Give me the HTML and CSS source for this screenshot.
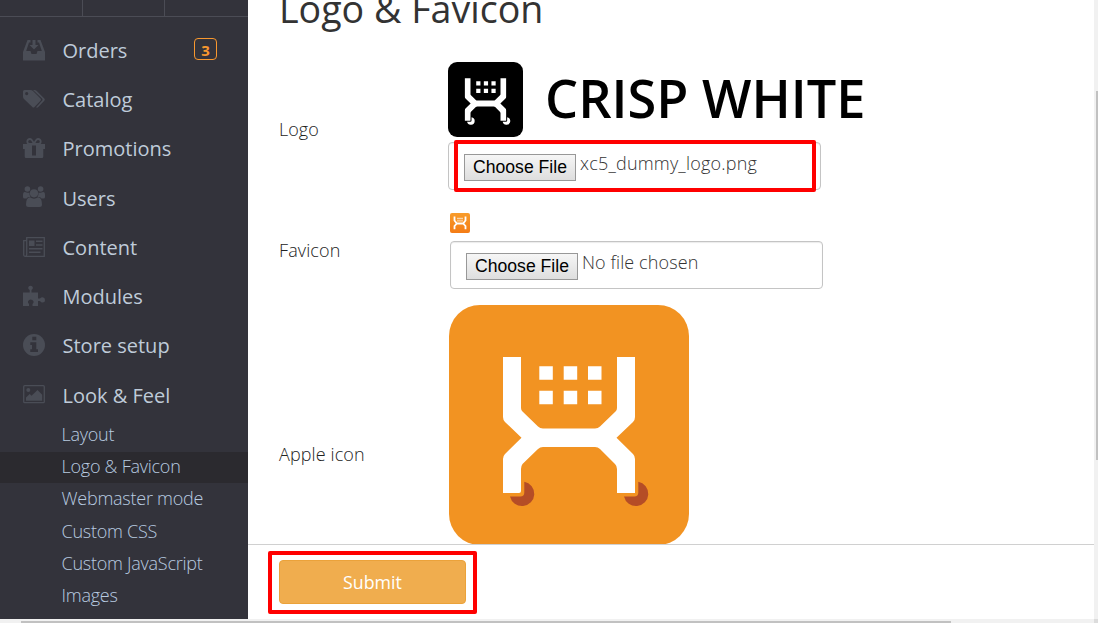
FILE: index.html
```html
<!DOCTYPE html>
<html lang="en">
<head>
<meta charset="utf-8">
<title>Logo &amp; Favicon</title>
<link rel="stylesheet" href="styles.css">
</head>
<body>
<svg class="defs" width="0" height="0">
  <symbol id="cart" viewBox="0 0 240 240">
    <path d="M54 52H72V103Q72 105 73.500 106.500L89 121.500Q91 123.500 94 123.500H146Q149 123.500 151 121.500L166.500 106.500Q168 105 168 103V52H186V112Q186 115 184 117L167.500 132.700L184 149Q186 151 186 154V188H168V164Q168 161 166 159L151 144Q149 142 146 142H94Q91 142 89 144L73.500 159Q72 161 72 164V186Q72 188 70 188H54V154Q54 151 56 149L72.500 132.700L56 117Q54 115 54 112Z"/>
    <path d="M90.300 61.300h13.500v13.500h-13.500zM114.700 61.300h13.500v13.500h-13.500zM139 61.300h13.500v13.500H139zM90.300 85.700h13.500v13.500h-13.500zM114.700 85.700h13.500v13.500h-13.500zM139 85.700h13.500v13.500H139z"/>
  </symbol>
  <symbol id="wheels" viewBox="0 0 240 240">
    <path d="M75.300 176.700A12.300 12.300 0 1 1 61 191.500H71.300Q75.300 191.500 75.300 187.500ZM189.300 176.700A12.300 12.300 0 1 1 175 191.500H185.300Q189.300 191.500 189.300 187.500Z"/>
  </symbol>
</svg>
<div class="app">
  <div class="page">
    <aside class="sidebar">
      <div class="tabs"><span></span><span></span><span></span></div>
      <nav class="menu">
        <a class="item"><svg class="icon" viewBox="0 0 22 22"><path fill-rule="evenodd" d="M4.500 1H7.500V3.500H6L3.200 12H7.500L8.500 15H13.500L14.500 12H18.800L16 3.500H14.500V1H17.500L22 13V21Q22 21.500 21.500 21.500H.5Q0 21.500 0 21V13ZM9.500 1H12.500V6H15.500L11 10.500L6.500 6H9.500Z"/></svg><span>Orders</span><b class="badge">3</b></a>
        <a class="item"><svg class="icon" viewBox="0 0 22 22"><path fill-rule="evenodd" d="M0 3.500Q0 2 1.500 2H7.500Q9 2 10 3L17.500 10.500Q18.500 11.600 17.500 12.700L11.500 19Q10.500 20 9.300 19L1 11Q0 10 0 8.500ZM3.700 4A1.600 1.600 0 1 0 3.700 7.200A1.600 1.600 0 1 0 3.700 4Z"/><path d="M10 2H11.500Q12.800 2 13.800 3L21.300 10.500Q22.300 11.600 21.300 12.700L15.300 19Q14.200 20.200 13 19.200L19 12.800Q20 11.600 19 10.500Z"/></svg><span>Catalog</span></a>
        <a class="item"><svg class="icon" viewBox="0 0 22 22"><path d="M0 7H22V12H20.300V19.500Q20.300 21 19 21H3Q1.700 21 1.700 19.500V12H0Z"/><path class="line" d="M11 7Q9 2 6.800 2A2.500 2.500 0 0 0 6.800 7ZM11 7Q13 2 15.200 2A2.500 2.500 0 0 1 15.200 7Z"/><path class="hole" d="M9 8.500H13V18.500H9Z"/></svg><span>Promotions</span></a>
        <a class="item"><svg class="icon" viewBox="0 0 22 22"><circle cx="4.400" cy="3" r="2.800"/><circle cx="17.600" cy="3" r="2.800"/><path d="M0 11V8.500Q0 5.500 2 6Q4.500 7.200 6.500 6.500Q6.300 9.500 7.500 11H5Q4 12 3.500 12.500H1.500Q0 12.500 0 11ZM22 11V8.500Q22 5.500 20 6Q17.500 7.200 15.500 6.500Q15.700 9.500 14.500 11H17Q18 12 18.500 12.500H20.500Q22 12.500 22 11Z"/><circle cx="11" cy="7.300" r="4.100"/><path d="M7 11.300Q11 14 15 11.300Q19 11.500 19 18.500Q19 21 16.500 21H5.500Q3 21 3 18.500Q3 11.500 7 11.300Z"/></svg><span>Users</span></a>
        <a class="item"><svg class="icon" viewBox="0 0 22 22"><path class="line thin" d="M3.700 1.700H21.300V20.300H2.200Q.7 20.300 .7 18.500V4.700H3.700V18.500Q3.700 20 2.500 20.300M3.700 1V5"/><path d="M6 4.500h5.500v5.500H6zM13 4.500h6.500V6H13zM13 8.300h6.500v1.500H13zM6 12h13.500v1.500H6zM6 15.500h11.500V17H6z"/></svg><span>Content</span></a>
        <a class="item"><svg class="icon" viewBox="0 0 22 22"><path d="M0 7.500H6.700V5Q5 4 5.200 2.500Q5.500 .7 7.500 .7T9.900 2.500Q10 4 8.500 5V7.500H15V13.500H17Q18 12.300 19.500 12.300Q22 12.500 22 15T19.500 17.500Q18 17.500 17 16H15V21H9.500V19Q11 18 10.500 16.200Q9.500 14.500 7.700 14.500T5 16.200Q4.500 18 6 19V21H0Z"/></svg><span>Modules</span></a>
        <a class="item"><svg class="icon" viewBox="0 0 22 22"><circle cx="11" cy="11" r="11"/><path class="hole" d="M9.300 2.700h4v3.600h-4zM7.300 8.300h6v7h1.700V18H7.300v-2.700H9V11H7.300z"/></svg><span>Store setup</span></a>
        <a class="item"><svg class="icon" viewBox="0 0 22 22"><rect class="line thin" x=".7" y="2.700" width="20.600" height="17" rx="1"/><circle cx="5.300" cy="7" r="2"/><path d="M3 17.700V14.500L6.700 11L8.500 12.800L14.500 7L19.200 11.700V17.700Z"/></svg><span>Look &amp; Feel</span></a>
      </nav>
      <nav class="submenu">
        <a>Layout</a>
        <a class="active">Logo &amp; Favicon</a>
        <a class="after">Webmaster mode</a>
        <a>Custom CSS</a>
        <a>Custom JavaScript</a>
        <a>Images</a>
      </nav>
    </aside>
    <main class="content">
      <div class="settings">
        <h1>Logo &amp; Favicon</h1>
        <div class="row logo-row">
          <label>Logo</label>
          <div class="field">
            <div class="logo"><svg class="logo-mark" viewBox="0 0 240 240"><rect width="240" height="240" rx="29"/><g fill="#fff"><use href="#cart"/><use href="#wheels"/></g></svg><span class="logo-name">CRISP WHITE</span></div>
            <div class="file marked"><span class="choose">Choose File</span><span class="filename dummy">xc5_dummy_logo.png</span></div>
          </div>
        </div>
        <div class="row favicon-row">
          <label>Favicon</label>
          <div class="field">
            <svg class="favicon" viewBox="0 0 20 20"><defs><linearGradient id="fav" x2="0" y2="1"><stop stop-color="#f89c2a"/><stop offset="1" stop-color="#f47c16"/></linearGradient></defs><rect width="20" height="20" rx="2" fill="url(#fav)"/><path d="M4.500 3.500V7.500L6.800 10.500L4.500 13V16.300M15.500 3.500V7.500L13.200 10.500L15.500 13V16.300M6.800 10.500H13.200" fill="none" stroke="#fff" stroke-width="1.800"/><path d="M7 5.500H13M7 7.800H13" stroke="#fbd5a6" stroke-width="1.300"/></svg>
            <div class="file"><span class="choose">Choose File</span><span class="filename none">No file chosen</span></div>
          </div>
        </div>
        <div class="row apple-row">
          <label>Apple icon</label>
          <svg class="apple" viewBox="0 0 240 240"><rect width="240" height="240" rx="31" fill="#f29322"/><use href="#wheels" fill="#b54d26"/><use href="#cart" fill="#fff"/></svg>
        </div>
      </div>
      <footer class="actions"><div class="submit-mark"><button class="submit">Submit</button></div></footer>
    </main>
  </div>
  <div class="vbar"><i></i></div>
  <div class="hbar"><i></i></div>
  <div class="corner"></div>
</div>
</body>
</html>
```
FILE: styles.css
```css
*, *::after { box-sizing: border-box; }
body { margin: 0; font-family: "Open Sans", "Noto Sans", sans-serif; overflow: hidden; background: #fff; }
.defs { position: absolute; }
.app { display: grid; grid-template-columns: 1094px 4px; grid-template-rows: 619px 4px; width: 1098px; height: 623px; }
.page { display: flex; overflow: hidden; }
.sidebar { width: 248px; flex: none; background: #33333b; color: #bfcbd9; }
.tabs { display: flex; height: 17px; border-bottom: 1px solid #4b4c55; }
.tabs span { width: 82px; border-right: 1px solid #4b4c55; }
.tabs span:first-child { width: 83px; }
.tabs span:last-child { border: 0; }
.menu { padding-top: 8.500px; }
.item { display: flex; align-items: center; height: 49.250px; padding: 0 31px 0 23px; font-size: 20px; line-height: 28px; }
.item > span { padding-top: 1.500px; }
.icon { width: 22px; height: 22px; margin-right: 17.500px; margin-top: -1px; flex: none; fill: #4a4d56; }
.line { fill: none; stroke: #4a4d56; stroke-width: 1.800; }
.thin { stroke-width: 1.300; }
.hole { fill: #33333b; }
.badge { width: 23px; height: 22px; margin-left: auto; margin-top: -2px; border: 1px solid #f8982f; border-radius: 4px; color: #f8982f; font-size: 15px; line-height: 22px; text-align: center; }
.submenu { display: flex; flex-direction: column; margin-top: -2px; }
.submenu a { height: 32.200px; padding-left: 61.500px; font-size: 18px; letter-spacing: -.25px; font-weight: 300; line-height: 32px; color: #b8cbe0; }
.submenu a:first-child { height: 34.200px; }
.submenu .active { height: 31px; line-height: 29px; background: #2b2a2f; }
.submenu .after { line-height: 30px; }
.content { flex: 1; min-width: 0; display: flex; flex-direction: column; }
.settings { height: 544px; padding-left: 31px; color: #333; }
h1 { margin: -18px 0 0; height: 55px; font-size: 37.600px; line-height: 54px; font-weight: 400; white-space: nowrap; }
.row { display: flex; align-items: center; }
label { width: 169px; flex: none; font-size: 18px; font-weight: 300; line-height: 24px; color: #222; }
.logo-row { margin-top: 25px; height: 134px; }
.field { display: flex; flex-direction: column; }
.logo-row .field { height: 134px; }
.logo { display: flex; width: 415px; height: 75px; }
.logo-mark { width: 75px; height: 75px; flex: none; margin-right: 22px; }
.logo-name { font-size: 52.300px; line-height: 71px; font-weight: 600; color: #000; white-space: nowrap; }
.file { position: relative; display: flex; align-items: center; width: 373px; height: 48px; margin-top: 5px; padding-left: 15px; border: 1px solid #c4c4c4; border-radius: 4px; box-shadow: inset 0 1px 1px rgba(0,0,0,.08); }
.marked::after { content: ""; position: absolute; left: 5px; top: -3px; width: 362px; height: 52px; border: 4px solid #f00; border-radius: 2px; }
.choose { width: 112px; height: 27px; margin-top: 3px; border: 1px solid #989898; background: linear-gradient(#f6f6f6, #dedede); color: #000; font-family: "Liberation Sans", Arial, sans-serif; font-size: 17.600px; line-height: 25px; text-align: center; white-space: nowrap; }
.filename { margin: -7px 0 0 4px; font-size: 18px; line-height: 24px; font-weight: 300; color: #333; white-space: nowrap; }
.dummy { letter-spacing: .2px; }
.none { letter-spacing: .1px; }
.favicon-row { margin-top: 17px; height: 76px; }
.favicon-row label { width: 171px; padding-bottom: 2px; letter-spacing: .1px; }
.favicon { width: 20px; height: 20px; margin-bottom: 3px; }
.apple-row { margin-top: 16px; height: 240px; }
.apple-row label { width: 170px; padding-top: 58px; letter-spacing: .1px; }
.apple { width: 240px; height: 240px; }
.actions { height: 75px; padding: 6px 0 0 20px; border-top: 1px solid #d0d0d0; position: relative; background: #fff; }
.submit-mark { width: 209px; height: 63px; padding: 5px 7px; border: 4px solid #f00; border-radius: 2px; }
.submit { display: block; width: 187px; height: 44px; border: 1px solid #eba23a; border-radius: 4px; background: #f0ad4e; color: #fff; font: 400 17.800px/40px "Open Sans", sans-serif; }
.vbar, .hbar { background: #f1f1f1; overflow: hidden; }
.vbar i { display: block; margin: 91px 0 0 2px; width: 2px; height: 369px; background: #c1c1c1; }
.hbar i { display: block; margin: 2px 0 0 21px; width: 930px; height: 2px; background: #c1c1c1; }
.corner { background: #dcdcdc; }
```
